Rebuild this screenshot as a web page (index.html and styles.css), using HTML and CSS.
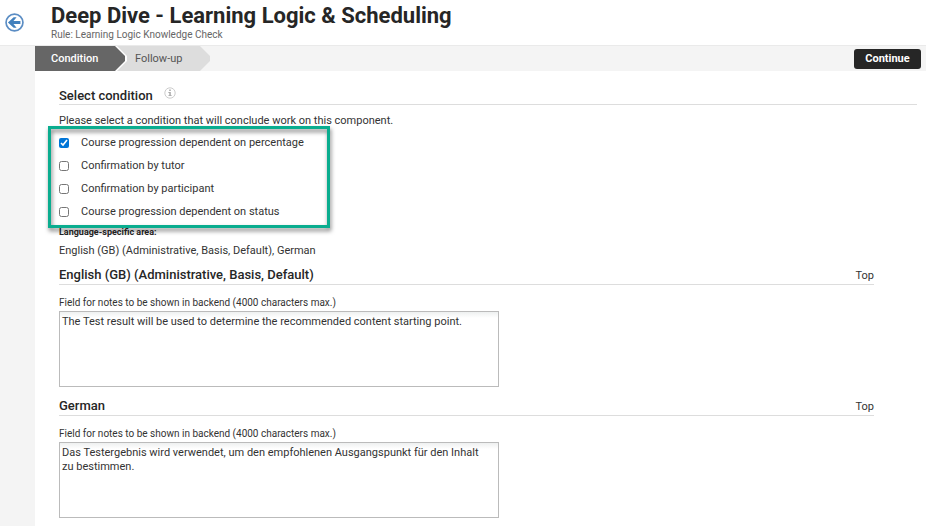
FILE: index.html
```html
<!DOCTYPE html>
<html lang="en">
<head>
  <meta charset="UTF-8">
  <title>Deep Dive - Learning Logic &amp; Scheduling</title>
  <link rel="stylesheet" href="styles.css">
</head>
<body>
  <header class="header">
    <a class="back" href="#" aria-label="Back">
      <svg width="19" height="19" viewBox="0 0 18 18">
        <circle cx="9" cy="9" r="8" fill="#fff" stroke="#5b8dc4" stroke-width="1.6"/>
        <path d="M2.8 9 L8.2 4 H11 L8 7.6 H14.6 V10.4 H8 L11 14 H8.2 Z" fill="#4280bd"/>
      </svg>
    </a>
    <div>
      <h1>Deep Dive - Learning Logic &amp; Scheduling</h1>
      <p class="rule">Rule: Learning Logic Knowledge Check</p>
    </div>
  </header>

  <div class="page">
    <main class="main">
      <nav class="steps">
        <a class="step active" href="#">Condition</a>
        <a class="step next" href="#">Follow-up</a>
        <button class="continue" type="submit" form="conditionForm">Continue</button>
      </nav>

      <form class="content" id="conditionForm">
        <h2 class="section-title">Select condition
          <svg class="info" width="12" height="12" viewBox="0 0 12 12">
            <circle cx="6" cy="6" r="5.2" fill="none" stroke="#ccc"/>
            <path d="M5.2 2.6 H6.8 V4 H5.2 Z M4.4 5 H6.8 V8.2 H7.7 V9.1 H4.4 V8.2 H5.3 V5.9 H4.4 Z" fill="#aaa"/>
          </svg>
        </h2>
        <p class="hint">Please select a condition that will conclude work on this component.</p>

        <div class="conditions">
          <label><input type="checkbox" checked>Course progression dependent on percentage</label>
          <label><input type="checkbox">Confirmation by tutor</label>
          <label><input type="checkbox">Confirmation by participant</label>
          <label><input type="checkbox">Course progression dependent on status</label>
        </div>

        <p class="area">Language-specific area:</p>
        <p class="languages">English (GB) (Administrative, Basis, Default), German</p>

        <section class="language">
          <div class="language-head">
            <h2>English (GB) (Administrative, Basis, Default)</h2>
            <a href="#">Top</a>
          </div>
          <label for="notesEn">Field for notes to be shown in backend (4000 characters max.)</label>
          <textarea id="notesEn" maxlength="4000" spellcheck="false">The Test result will be used to determine the recommended content starting point.</textarea>
        </section>

        <section class="language">
          <div class="language-head">
            <h2>German</h2>
            <a href="#">Top</a>
          </div>
          <label for="notesDe">Field for notes to be shown in backend (4000 characters max.)</label>
          <textarea id="notesDe" maxlength="4000" spellcheck="false">Das Testergebnis wird verwendet, um den empfohlenen Ausgangspunkt für den Inhalt zu bestimmen.</textarea>
        </section>
      </form>
    </main>
  </div>
</body>
</html>
```
FILE: styles.css
```css
* {
  box-sizing: border-box;
}
body {
  margin: 0;
  font-family: Roboto, "Liberation Sans", sans-serif;
  font-size: 11px;
  line-height: 14px;
  color: #333;
  background: #fff;
}
h1, h2, p {
  margin: 0;
}
a {
  color: inherit;
  text-decoration: none;
}

/* header */
.header {
  display: flex;
  height: 46px;
  border-bottom: 1px solid #eaeaea;
}
.back {
  width: 51px;
  padding: 13px 0 0 5px;
}
.back svg {
  display: block;
}
h1 {
  padding-top: 2px;
  font-size: 22px;
  line-height: 27px;
  font-weight: 700;
  color: #262626;
}
.rule {
  font-size: 10px;
  line-height: 12px;
  color: #666;
}

.page {
  padding-left: 35px;
  background: #f4f4f4;
}
.main {
  background: #fff;
}

/* steps */
.steps {
  display: flex;
  align-items: center;
  height: 25px;
  padding-right: 5px;
  background: #f4f4f4;
}
.step {
  height: 25px;
  line-height: 25px;
  padding-left: 16px;
}
.active {
  position: relative;
  z-index: 1;
  width: 92px;
  color: #fff;
  font-weight: 500;
  background: #fff;
  clip-path: polygon(0 0, 82px 0, 92px 10px, 92px 15px, 82px 100%, 0 100%);
}
.active::before {
  content: "";
  position: absolute;
  inset: 0;
  z-index: -1;
  background: #666;
  clip-path: polygon(0 0, 80px 0, 90px 10px, 90px 15px, 80px 100%, 0 100%);
}
.next {
  width: 97px;
  margin-left: -13px;
  padding-left: 21px;
  color: #555;
  background: #ddd;
  clip-path: polygon(0 0, 86px 0, 96px 10px, 96px 15px, 86px 100%, 0 100%);
}
.continue {
  width: 67px;
  height: 20px;
  margin-left: auto;
  padding: 0;
  border: 0;
  border-radius: 3px;
  font: bold 11px Roboto, "Liberation Sans", sans-serif;
  color: #fff;
  background: #262626;
}

/* form */
.content {
  padding: 16px 9px 8px 24px;
}
h2 {
  font-size: 13px;
  line-height: 17px;
  font-weight: 500;
  color: #262626;
}
.section-title {
  display: flex;
  height: 18px;
  border-bottom: 1px solid #ddd;
}
.info {
  margin-left: 11px;
}
.hint {
  padding: 9px 0 8px;
}
.conditions {
  position: relative;
  margin-bottom: 6px;
}
.conditions::after {
  content: "";
  position: absolute;
  top: -10px;
  left: -11px;
  box-sizing: border-box;
  width: 282px;
  height: 102px;
  border: 3px solid #0aad8f;
  filter: drop-shadow(1px 3px 2px rgba(0,0,0,0.5));
  pointer-events: none;
}
.conditions label {
  display: flex;
  align-items: center;
  height: 14px;
}
.conditions label + label {
  margin-top: 9px;
}
.conditions input {
  width: 10px;
  height: 10px;
  margin: 0 12px 0 0;
  accent-color: #0075d7;
}
.area {
  padding-bottom: 5px;
  font-size: 9px;
  font-weight: bold;
  color: #262626;
}
.languages {
  padding-bottom: 8px;
}
.language {
  margin-right: 43px;
  margin-bottom: 10px;
}
.language-head {
  display: flex;
  justify-content: space-between;
  align-items: baseline;
  height: 19px;
  margin-bottom: 11px;
  border-bottom: 1px solid #ddd;
}
.language label {
  display: block;
  font-size: 10px;
  margin-bottom: 1px;
}
textarea {
  display: block;
  width: 440px;
  max-width: 100%;
  height: 76px;
  padding: 3px 10px 3px 2px;
  border: 1px solid #bbb;
  font: 11px/14px Roboto, "Liberation Sans", sans-serif;
  color: #333;
  background: linear-gradient(#eef0f0, #fff 6px);
  resize: none;
}
```
